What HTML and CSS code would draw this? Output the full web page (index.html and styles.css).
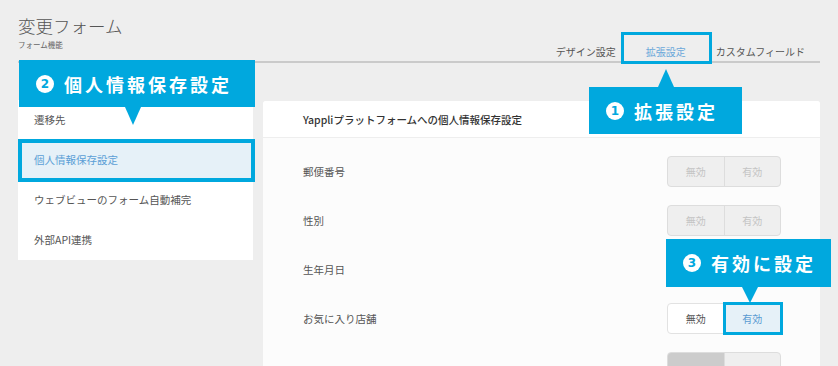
FILE: index.html
```html
<!DOCTYPE html>
<html lang="ja">
<head>
    <meta charset="UTF-8">
    <meta name="viewport" content="width=device-width, initial-scale=1.0">
    <title>変更フォーム</title>
    <link rel="stylesheet" href="styles.css">
</head>
<body>
    <div class="page">
        <header class="head">
            <div class="head-title">
                <h1 class="title">変更フォーム</h1>
                <p class="sub">フォーム機能</p>
            </div>
            <nav class="tabs">
                <span class="tab">デザイン設定</span>
                <span class="tab active">拡張設定<span class="mark"></span></span>
                <span class="tab">カスタムフィールド</span>
            </nav>
        </header>

        <div class="body">
            <ul class="side">
                <li class="side-item">遷移先</li>
                <li class="side-item selected">個人情報保存設定</li>
                <li class="side-item">ウェブビューのフォーム自動補完</li>
                <li class="side-item">外部API連携</li>
            </ul>

            <section class="panel">
                <div class="panel-head">Yappliプラットフォームへの個人情報保存設定</div>
                <div class="rows">
                    <div class="row">
                        <span class="label">郵便番号</span>
                        <div class="toggle disabled"><span>無効</span><span>有効</span></div>
                    </div>
                    <div class="row">
                        <span class="label">性別</span>
                        <div class="toggle disabled"><span>無効</span><span>有効</span></div>
                    </div>
                    <div class="row">
                        <span class="label">生年月日</span>
                        <div class="toggle disabled"><span>無効</span><span>有効</span></div>
                    </div>
                    <div class="row">
                        <span class="label">お気に入り店舗</span>
                        <div class="toggle on"><span>無効</span><span class="picked">有効</span><span class="mark"></span></div>
                    </div>
                    <div class="row">
                        <span class="label"></span>
                        <div class="toggle disabled"><span class="picked"></span><span></span></div>
                    </div>
                </div>
            </section>
        </div>

        <!-- 説明用の吹き出し -->
        <div class="callout callout-1"><span class="num">1</span>拡張設定</div>
        <div class="callout callout-2"><span class="num">2</span>個人情報保存設定</div>
        <div class="callout callout-3"><span class="num">3</span>有効に設定</div>
    </div>
</body>
</html>
```

FILE: styles.css
```css
* { box-sizing: border-box; }
body { margin: 0; background: #eeeeee; font-family: "Noto Sans CJK JP", "Noto Sans", sans-serif; color: #555; overflow: hidden; }
.page { position: relative; padding: 15px 18px 0; }

.head { display: flex; justify-content: space-between; align-items: flex-end; border-bottom: 2px solid #cacaca; }
.title { margin: 0; font-size: 17.5px; line-height: 22px; font-weight: 300; color: #555; }
.sub { margin: 3px 0 11px; font-size: 7.5px; line-height: 10px; color: #666; }
.tabs { display: flex; }
.tab { position: relative; padding: 0 15px 2px; font-size: 10px; line-height: 14px; color: #555; }
.tab.active { color: #6aa8da; }
.tab .mark { position: absolute; left: -10px; right: -11px; top: -13px; bottom: -3px; border: 3px solid #00a8de; }

.body { display: flex; gap: 10px; margin-top: 37px; }
.side { list-style: none; margin: 0; padding: 0; width: 235px; background: #fff; align-self: flex-start; }
.side-item { position: relative; height: 40px; line-height: 40px; padding-left: 16px; font-size: 10.5px; color: #555; }
.side-item.selected { background: #e6f1f8; color: #5b9fd6; }
.side-item.selected::after { content: ""; position: absolute; top: -1px; left: 0; right: -2px; bottom: -2px; border: 4px solid #00a8de; }

.panel { flex: 1; background: #fcfcfc; border-radius: 3px 3px 0 0; margin-top: 1px; }
.panel-head { height: 37px; line-height: 37px; padding-left: 40px; border-bottom: 1px solid #eeeeee; background: #fff; font-size: 10.5px; font-weight: 500; color: #333; border-radius: 3px 3px 0 0; }
.rows { padding-top: 9px; }
.row { display: flex; align-items: center; justify-content: space-between; height: 49px; padding: 0 39px 0 40px; }
.label { font-size: 10.5px; color: #555; }

.toggle { position: relative; display: flex; width: 114px; height: 31px; border: 1px solid #dddddd; border-radius: 4px; }
.toggle span { flex: 1; display: flex; align-items: center; justify-content: center; font-size: 10px; }
.toggle span + span { border-left: 1px solid #dddddd; }
.toggle.disabled { background: #efefef; }
.toggle.disabled span { color: #c4c4c4; }
.toggle.disabled .picked { background: #cccccc; border-radius: 3px 0 0 3px; }
.toggle.on { background: #fff; border-color: #e2e2e2; }
.toggle.on span { color: #555; }
.toggle.on .picked { background: #e6f1f8; color: #5b9bd2; border-radius: 0 3px 3px 0; }
.toggle .mark { position: absolute; top: -2px; right: -3px; width: 60px; height: 33px; border: 3px solid #00a8de; }
.toggle .mark + span { border: 0; }

.callout { position: absolute; display: flex; align-items: center; gap: 10px; padding-left: 17px; height: 47px; background: #00a8de; color: #fff; font-size: 18px; font-weight: 700; letter-spacing: 3px; }
.callout .num { width: 18px; height: 18px; border-radius: 50%; background: #fff; color: #00a8de; font-family: "DejaVu Sans", sans-serif; font-size: 12px; font-weight: 700; letter-spacing: 0; display: flex; align-items: center; justify-content: center; }
.callout::after { content: ""; position: absolute; border-left: 8px solid transparent; border-right: 8px solid transparent; }
.callout-1 { left: 589px; top: 87px; width: 153px; }
.callout-1::after { left: 69px; bottom: 100%; border-bottom: 18px solid #00a8de; }
.callout-2 { left: 19px; top: 60px; width: 236px; }
.callout-2::after { left: 106px; top: 100%; border-top: 18px solid #00a8de; }
.callout-3 { left: 666px; top: 239px; width: 165px; height: 48px; }
.callout-3::after { left: 76px; top: 100%; border-top: 16px solid #00a8de; }
```
